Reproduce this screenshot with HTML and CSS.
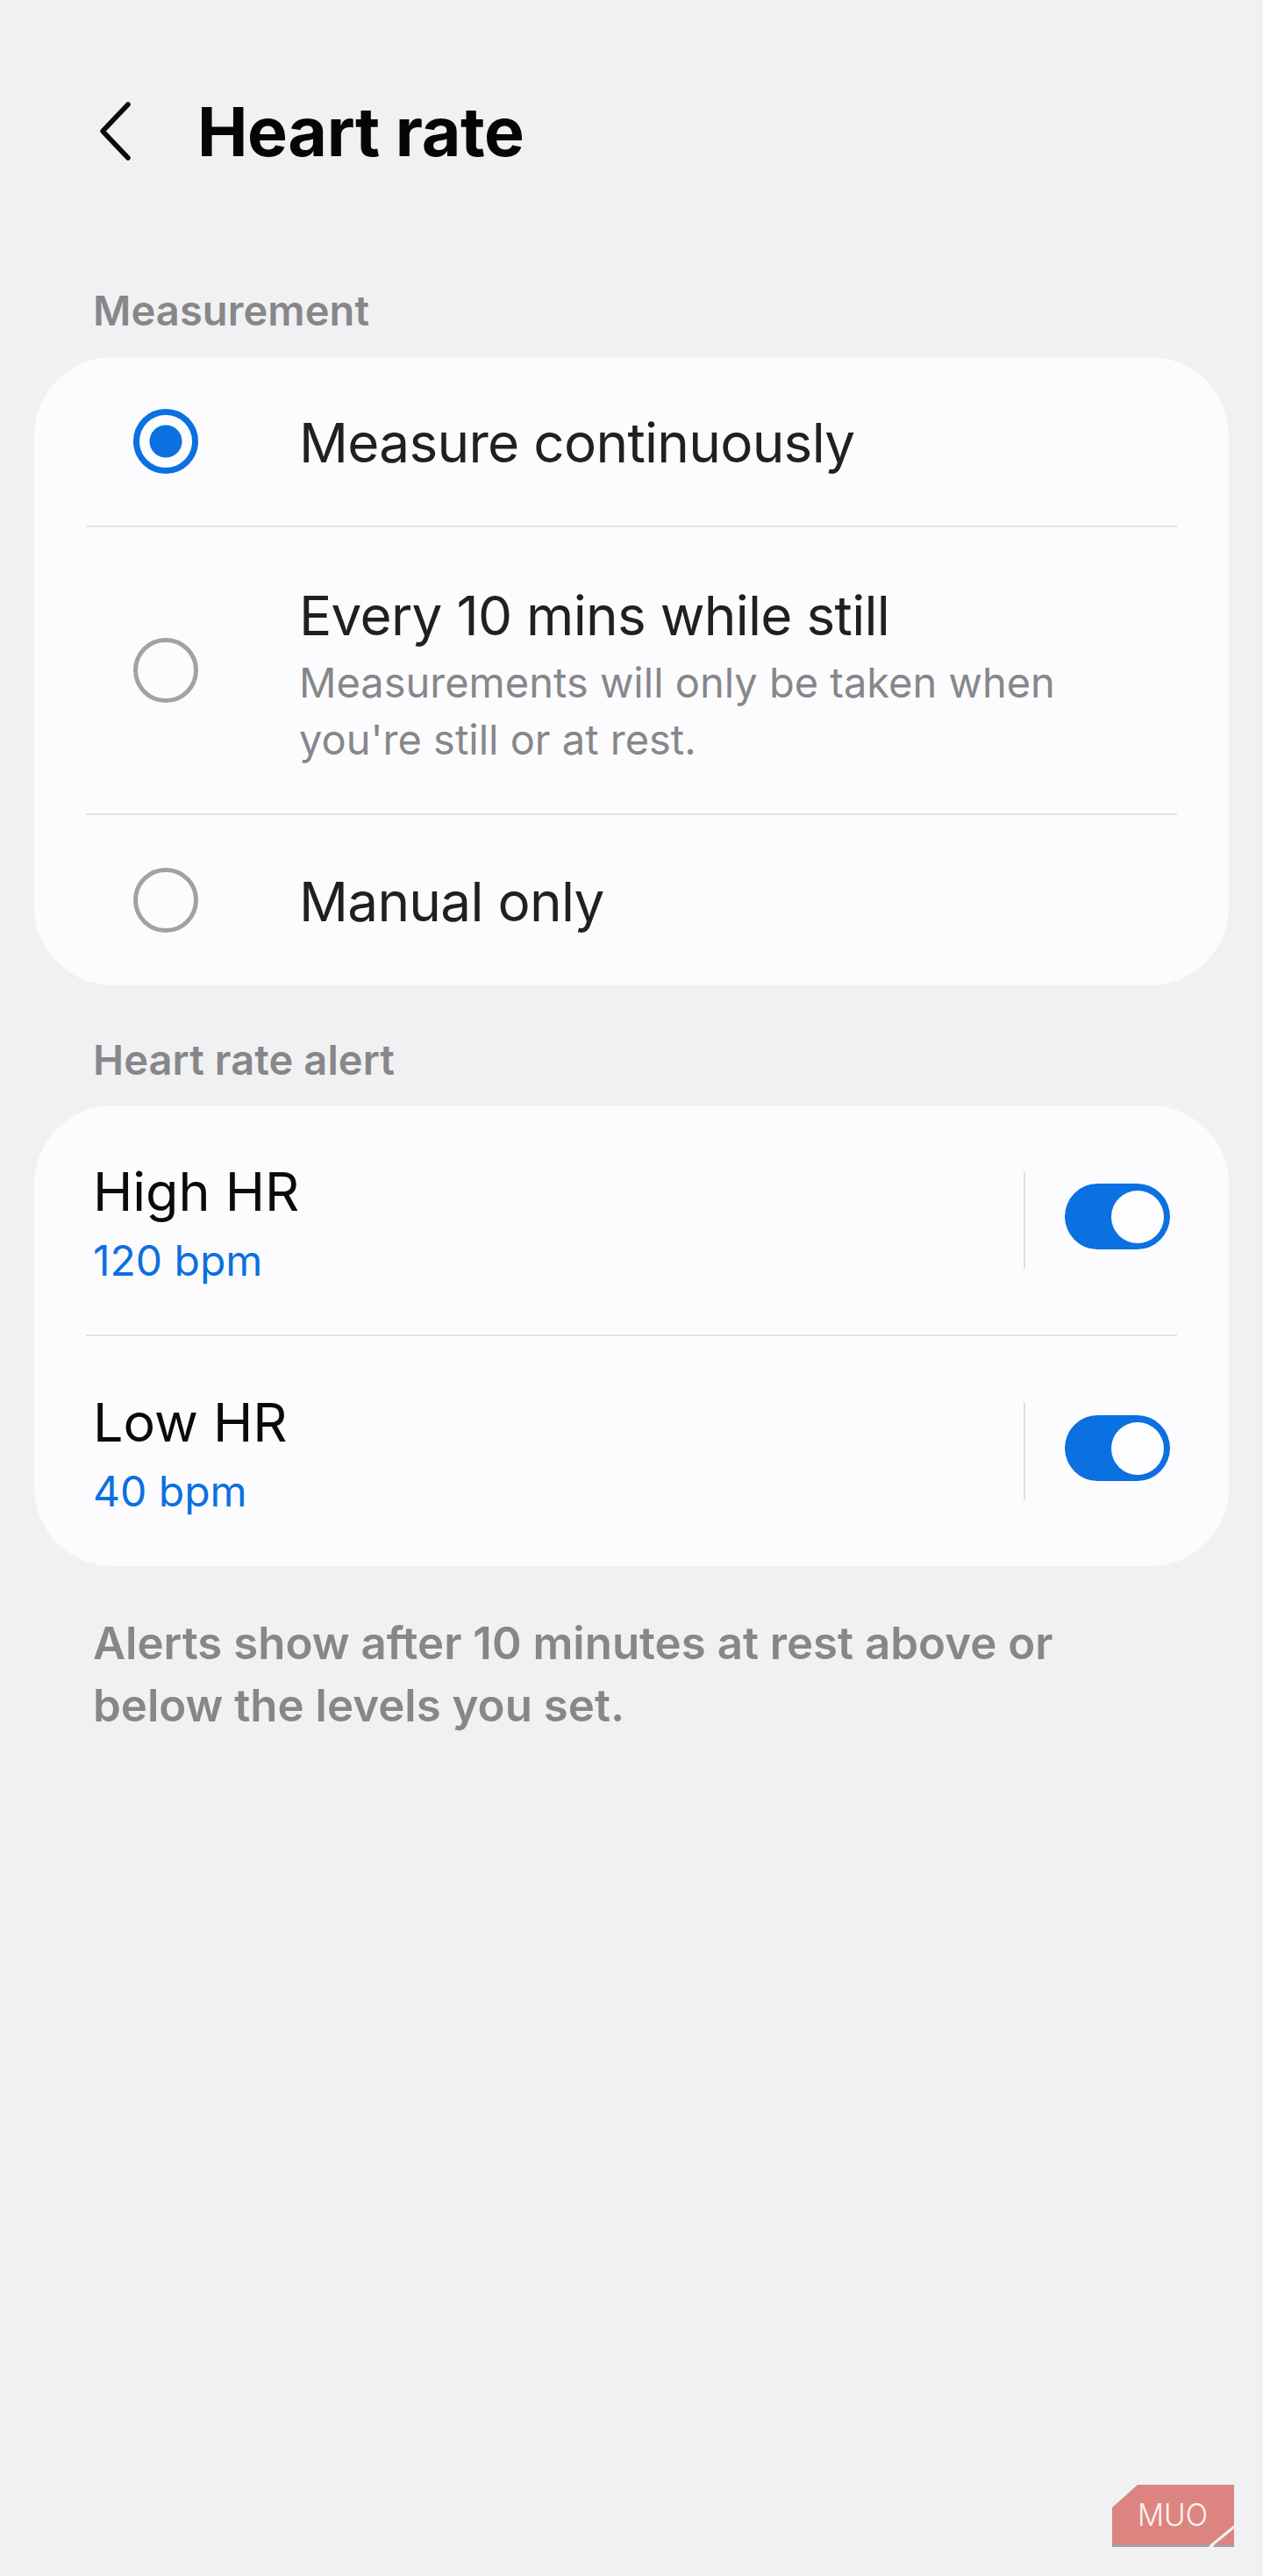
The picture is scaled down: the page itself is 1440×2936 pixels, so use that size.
FILE: index.html
```html
<!DOCTYPE html>
<html lang="en">

<head>
     <meta charset="UTF-8">
     <title>Heart rate</title>
     <meta name="viewport" content="width=device-width, initial-scale=1.0">
     <link rel="stylesheet" href="styles.css">
</head>

<body>

     <header class="top-bar">
          <svg class="back" width="42" height="72" viewBox="0 0 42 72" fill="none">
               <path d="M37 5 L8 35.5 L37 66" stroke="#0a0a0c" stroke-width="5.5" stroke-linecap="round" stroke-linejoin="round" />
          </svg>
          <h1>Heart rate</h1>
     </header>

     <h2 class="section-label first">Measurement</h2>
     <div class="card">
          <div class="radio-row short">
               <span class="radio checked"></span>
               <div class="radio-text">
                    <div class="title">Measure continuously</div>
               </div>
          </div>
          <div class="radio-row tall">
               <span class="radio"></span>
               <div class="radio-text">
                    <div class="title">Every 10 mins while still</div>
                    <div class="sub">Measurements will only be taken when<br>you're still or at rest.</div>
               </div>
          </div>
          <div class="radio-row short">
               <span class="radio"></span>
               <div class="radio-text">
                    <div class="title">Manual only</div>
               </div>
          </div>
     </div>

     <h2 class="section-label">Heart rate alert</h2>
     <div class="card">
          <div class="alert-row">
               <div class="alert-text">
                    <div class="name">High HR</div>
                    <div class="value">120 bpm</div>
               </div>
               <span class="vline"></span>
               <span class="toggle"></span>
          </div>
          <div class="alert-row">
               <div class="alert-text">
                    <div class="name">Low HR</div>
                    <div class="value">40 bpm</div>
               </div>
               <span class="vline"></span>
               <span class="toggle"></span>
          </div>
     </div>

     <p class="note">Alerts show after 10 minutes at rest above or<br>below the levels you set.</p>

     <!-- watermark sits over the page corner -->
     <svg class="watermark" width="142" height="72" viewBox="0 0 142 72">
          <path d="M0 68 H112 L110 71 H0 Z M117 68 H139 V71 H115 Z" fill="#a8a0a0" />
          <path d="M29 0 H139 V46 L112 68 H0 V26 Z" fill="#dc8580" />
          <path d="M139 50 V68 H117 Z" fill="#dc8580" />
          <text x="29" y="47" textLength="80" lengthAdjust="spacingAndGlyphs" class="mark-text">MUO</text>
     </svg>

</body>

</html>
```

FILE: styles.css
```css
:root {
     --bg: #f1f1f3;
     --card: #fcfcfe;
     --line: #e3e3e5;
     --grey: #87878a;
     --blue: #0b70e0;
}

* {
     box-sizing: border-box;
     margin: 0;
     padding: 0;
}

body {
     font-family: Inter, "Noto Sans", sans-serif;
     background-color: var(--bg);
     color: #202022;
     min-height: 2936px;
     position: relative;
     padding: 0 39px;
     overflow: hidden;
}

.top-bar {
     display: flex;
     align-items: center;
     height: 72px;
     margin-top: 114px;
     padding-left: 70px;
}

.back {
     flex: none;
}

.top-bar h1 {
     font-size: 77px;
     font-weight: 700;
     color: #050507;
     letter-spacing: -0.4px;
     margin-left: 74px;
}

.section-label {
     font-size: 47px;
     line-height: 60px;
     font-weight: 600;
     color: var(--grey);
     padding-left: 67px;
     margin-top: 55px;
     margin-bottom: 22px;
     letter-spacing: 0.1px;
}

.section-label.first {
     margin-top: 138px;
     margin-bottom: 23px;
}

.card {
     background: var(--card);
     border-radius: 90px;
}

.radio-row {
     display: flex;
     align-items: center;
     margin: 0 59px;
     padding-left: 54px;
     border-bottom: 2px solid var(--line);
}

.radio-row:last-child,
.alert-row:last-child {
     border-bottom: none;
}

.radio-row.short {
     height: 194px;
}

.radio-row.tall {
     height: 328px;
}

.radio {
     flex: none;
     width: 74px;
     height: 74px;
     border: 5px solid #a2a2a5;
     border-radius: 50%;
     margin-right: 115px;
}

.radio.checked {
     border: 7px solid var(--blue);
     background: radial-gradient(circle, var(--blue) 0 18px, transparent 19px);
}

.radio-text {
     padding-top: 4px;
}

.tall .radio-text {
     padding-top: 10px;
}

.title {
     font-size: 62px;
     line-height: 76px;
     font-weight: 400;
     letter-spacing: -0.7px;
}

.sub {
     font-size: 47px;
     line-height: 65px;
     margin-top: 5px;
     color: var(--grey);
}

.alert-row {
     display: flex;
     align-items: center;
     height: 263px;
     margin: 0 59px;
     padding: 0 8px;
     border-bottom: 2px solid var(--line);
}

.alert-row:last-child {
     height: 262px;
}

.alert-text {
     flex: 1;
     padding-top: 4px;
}

.name {
     font-size: 61px;
     line-height: 78px;
     color: #0a0a0c;
}

.value {
     font-size: 48px;
     line-height: 60px;
     margin-top: 10px;
     color: var(--blue);
}

.vline {
     width: 2px;
     height: 110px;
     background: #dedee0;
     margin-right: 45px;
}

.toggle {
     flex: none;
     position: relative;
     width: 120px;
     height: 75px;
     margin-bottom: 8px;
     border-radius: 38px;
     background: var(--blue);
}

.toggle::after {
     content: "";
     position: absolute;
     top: 8px;
     right: 7px;
     width: 60px;
     height: 60px;
     border-radius: 50%;
     background: #fdfdff;
}

.note {
     font-size: 51px;
     line-height: 71px;
     font-weight: 600;
     color: var(--grey);
     padding-left: 67px;
     margin-top: 52px;
}

.watermark {
     position: absolute;
     left: 1268px;
     top: 2832px;
}

.mark-text {
     font-family: Inter, sans-serif;
     font-size: 35px;
     font-weight: 300;
     fill: #fdf3f2;
}
```
